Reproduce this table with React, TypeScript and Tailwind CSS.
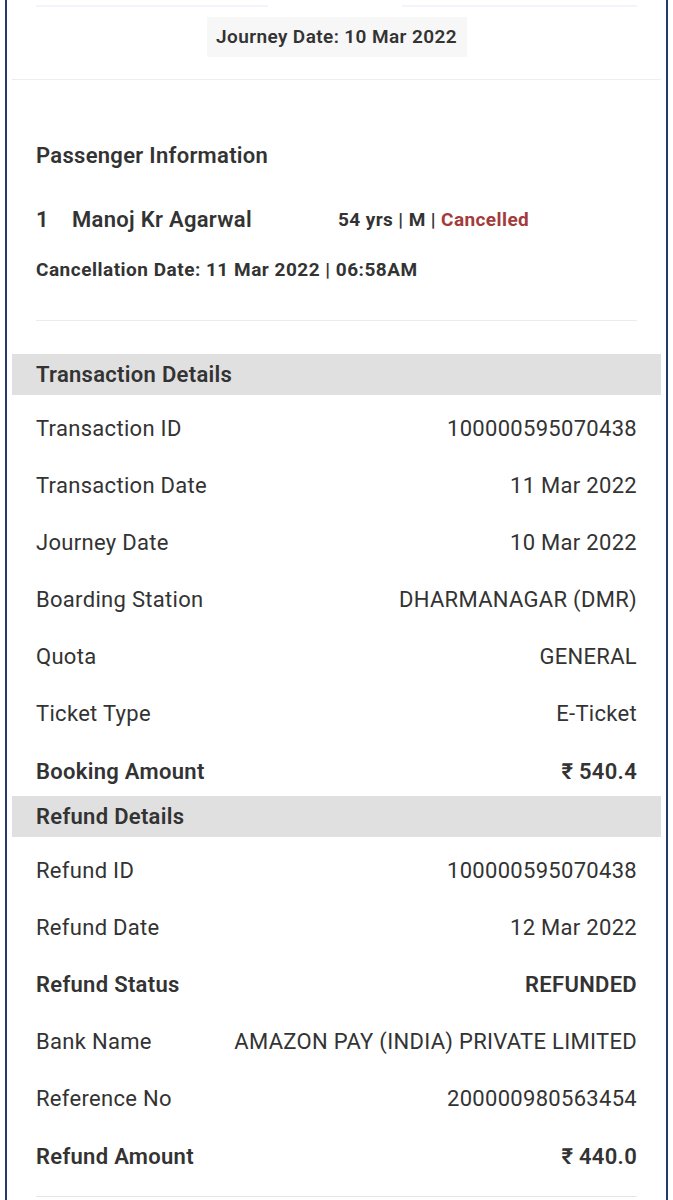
const font = { fontFamily: "Roboto, 'Liberation Sans', sans-serif" };

type Row = { label: string; value: string; strong?: boolean };

const transaction: Row[] = [
  { label: "Transaction ID", value: "100000595070438" },
  { label: "Transaction Date", value: "11 Mar 2022" },
  { label: "Journey Date", value: "10 Mar 2022" },
  { label: "Boarding Station", value: "DHARMANAGAR (DMR)" },
  { label: "Quota", value: "GENERAL" },
  { label: "Ticket Type", value: "E-Ticket" },
  { label: "Booking Amount", value: "₹ 540.4", strong: true },
];

const refund: Row[] = [
  { label: "Refund ID", value: "100000595070438" },
  { label: "Refund Date", value: "12 Mar 2022" },
  { label: "Refund Status", value: "REFUNDED", strong: true },
  { label: "Bank Name", value: "AMAZON PAY (INDIA) PRIVATE LIMITED" },
  { label: "Reference No", value: "200000980563454" },
  { label: "Refund Amount", value: "₹ 440.0", strong: true },
];

function SectionBand({ title }: { title: string }) {
  return (
    <div className="flex h-[41px] items-center bg-[#e0e0e0] px-6">
      <p className="text-[22px] font-semibold tracking-[0.3px] text-[#333]">{title}</p>
    </div>
  );
}

function DetailRows({ rows, lastRow }: { rows: Row[]; lastRow: string }) {
  return (
    <div className="mt-[5px] px-6">
      {rows.map((row, idx) => (
        <div
          key={row.label}
          className={`flex items-center justify-between text-[22px] tracking-[0.3px] text-[#333] ${
            idx === rows.length - 1 ? lastRow : "h-[57px]"
          } ${row.strong ? "font-semibold" : "font-normal"}`}
        >
          <span>{row.label}</span>
          <span>{row.value}</span>
        </div>
      ))}
    </div>
  );
}

export default function App() {
  return (
    <div className="h-[1200px] overflow-hidden bg-white px-[5px]" style={font}>
      <div className="h-full border-x-2 border-[#22396a] px-[5px]">
        {/* remains of the tab underline above */}
        <div className="flex justify-between px-[24px] pt-[5px]">
          <div className="h-[2px] w-[232px] bg-[#f2f3fb]" />
          <div className="h-[2px] w-[235px] bg-[#f2f3fb]" />
        </div>

        <div className="mt-[10px] flex justify-center">
          <div className="flex h-[40px] w-[260px] items-center justify-center bg-[#f7f7f7]">
            <p className="text-[19px] font-semibold tracking-[0.4px] text-[#333]">Journey Date: 10 Mar 2022</p>
          </div>
        </div>
        <div className="mt-[22px] h-px bg-[#eeeeee]" />

        <div className="px-6">
          <p className="mt-[62px] text-[22px] font-semibold leading-[28px] tracking-[0.3px] text-[#333]">
            Passenger Information
          </p>
          <div className="mt-[36px] flex items-center leading-[28px] text-[#333]">
            <span className="w-[36px] text-[22px] font-semibold">1</span>
            <span className="w-[266px] text-[22px] font-semibold tracking-[0.3px]">Manoj Kr Agarwal</span>
            <span className="text-[19px] font-bold tracking-[0.4px]">
              54 yrs | M | <span className="text-[#a33b3b]">Cancelled</span>
            </span>
          </div>
          <p className="mt-[22px] text-[19px] font-bold leading-[28px] tracking-[0.5px] text-[#333]">
            Cancellation Date: 11 Mar 2022 | 06:58AM
          </p>
          <div className="mt-[36px] h-px bg-[#ececec]" />
        </div>

        <div className="mt-[33px]">
          <SectionBand title="Transaction Details" />
          <DetailRows rows={transaction} lastRow="h-[54px] pt-[4px]" />
          <SectionBand title="Refund Details" />
          <DetailRows rows={refund} lastRow="h-[57px] pt-[2px]" />
          <div className="mx-6 mt-[12px] h-px bg-[#e6e6e6]" />
        </div>
      </div>
    </div>
  );
}
